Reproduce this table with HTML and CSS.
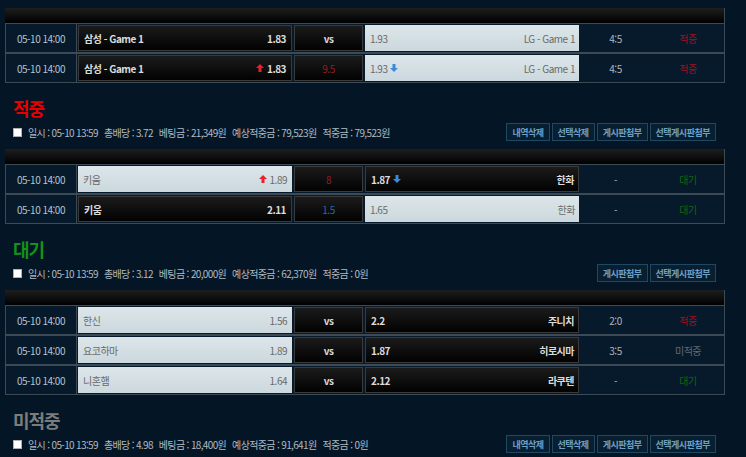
FILE: index.html
```html
<!DOCTYPE html>
<html lang="ko">
<head>
  <meta charset="UTF-8">
  <meta name="viewport" content="width=device-width, initial-scale=1.0">
  <title>베팅내역</title>
  <link rel="stylesheet" href="styles.css">
</head>
<body>
  <div class="wrap">

    <!-- 슬립 1 -->
    <div class="slip">
      <div class="bet-table">
        <div class="table-head"></div>
        <div class="row">
          <div class="c-date">05-10 14:00</div>
          <div class="c-team home dark"><span>삼성 - Game 1</span><span class="odd">1.83</span></div>
          <div class="c-mid dark">vs</div>
          <div class="c-team away light"><span class="odd">1.93</span><span>LG - Game 1</span></div>
          <div class="c-score">4:5</div>
          <div class="c-result win">적중</div>
        </div>
        <div class="row">
          <div class="c-date">05-10 14:00</div>
          <div class="c-team home dark"><span>삼성 - Game 1</span><span class="odd"><svg class="arr" viewBox="0 0 8 8"><polygon points="4,0 8,4 5.5,4 5.5,8 2.5,8 2.5,4 0,4" fill="#e8202a"/></svg>1.83</span></div>
          <div class="c-mid dark red">9.5</div>
          <div class="c-team away light"><span class="odd">1.93<svg class="arr down" viewBox="0 0 8 8"><polygon points="4,8 8,4 5.5,4 5.5,0 2.5,0 2.5,4 0,4" fill="#3a8ad8"/></svg></span><span>LG - Game 1</span></div>
          <div class="c-score">4:5</div>
          <div class="c-result win">적중</div>
        </div>
      </div>
      <h3 class="slip-title win">적중</h3>
      <div class="slip-info">
        <div class="summary">
          <span class="chk"></span>
          <span>일시 : 05-10 13:59</span>
          <span>총배당 : 3.72</span>
          <span>베팅금 : 21,349원</span>
          <span>예상적중금 : 79,523원</span>
          <span>적중금 : 79,523원</span>
        </div>
        <div class="btns">
          <button class="btn">내역삭제</button>
          <button class="btn">선택삭제</button>
          <button class="btn">게시판첨부</button>
          <button class="btn">선택게시판첨부</button>
        </div>
      </div>
    </div>

    <!-- 슬립 2 -->
    <div class="slip">
      <div class="bet-table">
        <div class="table-head"></div>
        <div class="row">
          <div class="c-date">05-10 14:00</div>
          <div class="c-team home light"><span>키움</span><span class="odd"><svg class="arr" viewBox="0 0 8 8"><polygon points="4,0 8,4 5.5,4 5.5,8 2.5,8 2.5,4 0,4" fill="#e8202a"/></svg>1.89</span></div>
          <div class="c-mid dark red">8</div>
          <div class="c-team away dark"><span class="odd">1.87<svg class="arr down" viewBox="0 0 8 8"><polygon points="4,8 8,4 5.5,4 5.5,0 2.5,0 2.5,4 0,4" fill="#3a8ad8"/></svg></span><span>한화</span></div>
          <div class="c-score">-</div>
          <div class="c-result wait">대기</div>
        </div>
        <div class="row">
          <div class="c-date">05-10 14:00</div>
          <div class="c-team home dark"><span>키움</span><span class="odd">2.11</span></div>
          <div class="c-mid dark blue">1.5</div>
          <div class="c-team away light"><span class="odd">1.65</span><span>한화</span></div>
          <div class="c-score">-</div>
          <div class="c-result wait">대기</div>
        </div>
      </div>
      <h3 class="slip-title wait">대기</h3>
      <div class="slip-info">
        <div class="summary">
          <span class="chk"></span>
          <span>일시 : 05-10 13:59</span>
          <span>총배당 : 3.12</span>
          <span>베팅금 : 20,000원</span>
          <span>예상적중금 : 62,370원</span>
          <span>적중금 : 0원</span>
        </div>
        <div class="btns">
          <button class="btn">게시판첨부</button>
          <button class="btn">선택게시판첨부</button>
        </div>
      </div>
    </div>

    <!-- 슬립 3 -->
    <div class="slip">
      <div class="bet-table">
        <div class="table-head"></div>
        <div class="row">
          <div class="c-date">05-10 14:00</div>
          <div class="c-team home light"><span>한신</span><span class="odd">1.56</span></div>
          <div class="c-mid dark">vs</div>
          <div class="c-team away dark"><span class="odd">2.2</span><span>주니치</span></div>
          <div class="c-score">2:0</div>
          <div class="c-result win">적중</div>
        </div>
        <div class="row">
          <div class="c-date">05-10 14:00</div>
          <div class="c-team home light"><span>요코하마</span><span class="odd">1.89</span></div>
          <div class="c-mid dark">vs</div>
          <div class="c-team away dark"><span class="odd">1.87</span><span>히로시마</span></div>
          <div class="c-score">3:5</div>
          <div class="c-result lose">미적중</div>
        </div>
        <div class="row">
          <div class="c-date">05-10 14:00</div>
          <div class="c-team home light"><span>니혼햄</span><span class="odd">1.64</span></div>
          <div class="c-mid dark">vs</div>
          <div class="c-team away dark"><span class="odd">2.12</span><span>라쿠텐</span></div>
          <div class="c-score">-</div>
          <div class="c-result wait">대기</div>
        </div>
      </div>
      <h3 class="slip-title lose">미적중</h3>
      <div class="slip-info">
        <div class="summary">
          <span class="chk"></span>
          <span>일시 : 05-10 13:59</span>
          <span>총배당 : 4.98</span>
          <span>베팅금 : 18,400원</span>
          <span>예상적중금 : 91,641원</span>
          <span>적중금 : 0원</span>
        </div>
        <div class="btns">
          <button class="btn">내역삭제</button>
          <button class="btn">선택삭제</button>
          <button class="btn">게시판첨부</button>
          <button class="btn">선택게시판첨부</button>
        </div>
      </div>
    </div>

  </div>
</body>
</html>
```

FILE: styles.css
```css
* {
  margin: 0;
  padding: 0;
  box-sizing: border-box;
  font-family: "Noto Sans CJK KR", "Noto Sans", sans-serif;
}

body {
  background: #041626;
  height: 457px;
  overflow: hidden;
}

.wrap {
  width: 720px;
  margin-left: 5px;
  padding-top: 8px;
}

/* 테이블 */
.table-head {
  height: 15px;
  background: linear-gradient(#1e1e1e, #000);
  border-right: 1px solid #3c4a55;
}

.row {
  display: flex;
  align-items: center;
  height: 30px;
  border: 1px solid #3c4a55;
  background: #061a2b;
  font-size: 10px;
  letter-spacing: -0.5px;
}

.c-date {
  align-self: stretch;
  width: 71px;
  border-right: 1px solid #3c4a55;
  display: flex;
  align-items: center;
  justify-content: center;
  color: #b9c3cc;
}

.c-team {
  width: 214px;
  height: 26px;
  display: flex;
  align-items: center;
  justify-content: space-between;
}

.c-team.home {
  margin-left: 1px;
  padding: 0 5px 0 5px;
}

.c-team.away {
  margin-left: 2px;
  padding: 0 4px 0 5px;
}

.c-mid {
  width: 69px;
  height: 26px;
  margin-left: 2px;
  display: flex;
  align-items: center;
  justify-content: center;
}

.dark {
  background: linear-gradient(#1b1b1b, #020202);
  border: 1px solid #3a3a3a;
  color: #dcdcdc;
  font-weight: bold;
}

.light {
  background: linear-gradient(#dde6ea, #cbd8dd);
  color: #6a6a6a;
}

.c-mid.red {
  color: #9a1a22;
  font-weight: normal;
}

.c-mid.blue {
  color: #2a68ac;
  font-weight: normal;
}

.odd {
  display: flex;
  align-items: center;
}

.arr {
  width: 8px;
  height: 8px;
  margin-right: 3px;
}

.arr.down {
  margin-right: 0;
  margin-left: 3px;
}

.c-score {
  width: 73px;
  text-align: center;
  color: #aeb8c0;
}

.c-result {
  flex: 1;
  text-align: center;
}

.c-result.win {
  color: #a3101e;
}

.c-result.wait {
  color: #0d6a0d;
}

.c-result.lose {
  color: #626a72;
}

/* 슬립 하단 */
.slip-title {
  margin-top: 13px;
  padding-left: 8px;
  height: 24px;
  line-height: 24px;
  font-size: 18px;
  font-weight: bold;
  letter-spacing: -1px;
}

.slip-title.win {
  color: #e60000;
}

.slip-title.wait {
  color: #17901a;
}

.slip-title.lose {
  color: #7c7c7c;
}

.slip-info {
  display: flex;
  justify-content: space-between;
  align-items: center;
  height: 18px;
  margin-top: 3px;
  margin-bottom: 8px;
  padding: 0 9px 0 8px;
}

.summary {
  display: flex;
  align-items: center;
  gap: 6px;
  font-size: 10px;
  letter-spacing: -0.65px;
  color: #b0bac2;
}

.chk {
  width: 9px;
  height: 9px;
  background: #fff;
  border: 1px solid #b0b0b0;
}

.btns {
  display: flex;
  gap: 2px;
}

.btn {
  height: 18px;
  padding: 0 5px;
  background: #071f31;
  border: 1px solid #1f4962;
  color: #6f9fc4;
  font-size: 9px;
  font-weight: bold;
  letter-spacing: -0.5px;
  cursor: pointer;
}
```
